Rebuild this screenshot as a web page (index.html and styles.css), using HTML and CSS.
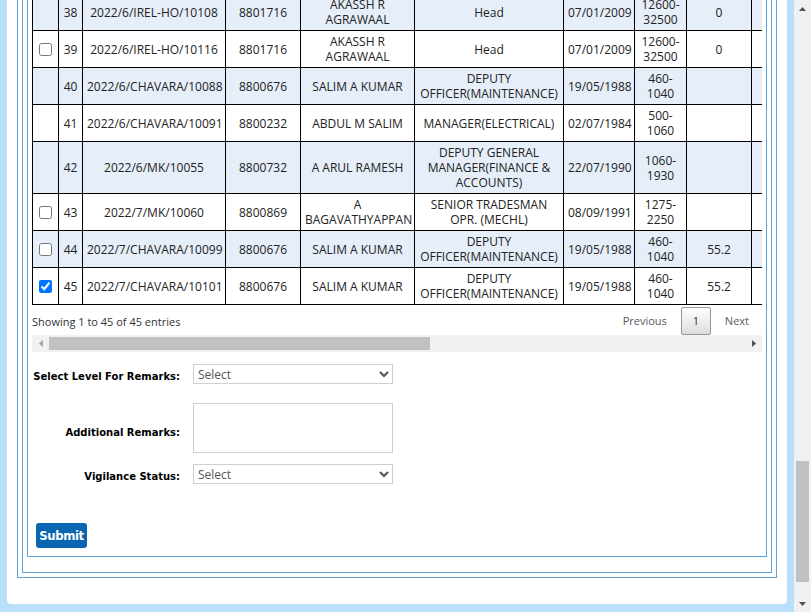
FILE: index.html
```html
<!DOCTYPE html>
<html lang="en">
<head>
<meta charset="utf-8">
<title>Remarks</title>
<link rel="stylesheet" href="styles.css">
</head>
<body>
<div class="page">
  <div class="viewport">
    <div class="panel">
      <div class="box box-outer">
        <div class="box box-mid">
          <div class="box box-inner">
            <div class="dt-scroll">
              <table class="grid">
                <colgroup>
                  <col class="w1"><col class="w2"><col class="w3"><col class="w4"><col class="w5">
                  <col class="w6"><col class="w7"><col class="w8"><col class="w9"><col class="w10">
                </colgroup>
                <tbody>
                  <tr class="shade">
                    <td></td><td>38</td><td class="nw">2022/6/IREL-HO/10108</td><td>8801716</td><td>AKASSH R AGRAWAAL</td><td>Head</td><td class="nw">07/01/2009</td><td>12600-<wbr>32500</td><td>0</td><td></td>
                  </tr>
                  <tr>
                    <td><input type="checkbox" class="chk"></td><td>39</td><td class="nw">2022/6/IREL-HO/10116</td><td>8801716</td><td>AKASSH R AGRAWAAL</td><td>Head</td><td class="nw">07/01/2009</td><td>12600-<wbr>32500</td><td>0</td><td></td>
                  </tr>
                  <tr class="shade">
                    <td></td><td>40</td><td class="nw">2022/6/CHAVARA/10088</td><td>8800676</td><td>SALIM A KUMAR</td><td>DEPUTY OFFICER(MAINTENANCE)</td><td class="nw">19/05/1988</td><td>460-<wbr>1040</td><td></td><td></td>
                  </tr>
                  <tr>
                    <td></td><td>41</td><td class="nw">2022/6/CHAVARA/10091</td><td>8800232</td><td>ABDUL M SALIM</td><td>MANAGER(ELECTRICAL)</td><td class="nw">02/07/1984</td><td>500-<wbr>1060</td><td></td><td></td>
                  </tr>
                  <tr class="shade">
                    <td></td><td>42</td><td class="nw">2022/6/MK/10055</td><td>8800732</td><td>A ARUL RAMESH</td><td>DEPUTY GENERAL MANAGER(FINANCE &amp; ACCOUNTS)</td><td class="nw">22/07/1990</td><td>1060-<wbr>1930</td><td></td><td></td>
                  </tr>
                  <tr>
                    <td><input type="checkbox" class="chk"></td><td>43</td><td class="nw">2022/7/MK/10060</td><td>8800869</td><td>A BAGAVATHYAPPAN</td><td>SENIOR TRADESMAN OPR. (MECHL)</td><td class="nw">08/09/1991</td><td>1275-<wbr>2250</td><td></td><td></td>
                  </tr>
                  <tr class="shade">
                    <td><input type="checkbox" class="chk"></td><td>44</td><td class="nw">2022/7/CHAVARA/10099</td><td>8800676</td><td>SALIM A KUMAR</td><td>DEPUTY OFFICER(MAINTENANCE)</td><td class="nw">19/05/1988</td><td>460-<wbr>1040</td><td>55.2</td><td></td>
                  </tr>
                  <tr>
                    <td><input type="checkbox" class="chk" checked></td><td>45</td><td class="nw">2022/7/CHAVARA/10101</td><td>8800676</td><td>SALIM A KUMAR</td><td>DEPUTY OFFICER(MAINTENANCE)</td><td class="nw">19/05/1988</td><td>460-<wbr>1040</td><td>55.2</td><td>55.2</td>
                  </tr>
                </tbody>
              </table>
              <div class="dt-foot">
                <div class="dt-info">Showing 1 to 45 of 45 entries</div>
                <div class="dt-pager">
                  <span class="pg disabled">Previous</span>
                  <span class="pg current">1</span>
                  <span class="pg disabled">Next</span>
                </div>
              </div>
            </div>
            <div class="hbar">
              <div class="hbtn"><svg width="4" height="7" viewBox="0 0 4 7"><polygon points="4,0 4,7 0,3.5" fill="#a3a3a3"/></svg></div>
              <div class="hthumb"></div>
              <div class="hspace"></div>
              <div class="hbtn"><svg width="4" height="7" viewBox="0 0 4 7"><polygon points="0,0 0,7 4,3.5" fill="#505050"/></svg></div>
            </div>
            <div class="form">
              <div class="frow r1">
                <label class="flabel">Select Level For Remarks:</label>
                <select class="fselect"><option>Select</option></select>
              </div>
              <div class="frow r2">
                <label class="flabel lab-ta">Additional Remarks:</label>
                <textarea class="ftext"></textarea>
              </div>
              <div class="frow r3">
                <label class="flabel lab-vs">Vigilance Status:</label>
                <select class="fselect"><option>Select</option></select>
              </div>
            </div>
            <button class="submit" type="button">Submit</button>
          </div>
        </div>
      </div>
    </div>
  </div>
  <div class="vbar">
    <div class="vbtn"><svg width="7" height="4" viewBox="0 0 7 4"><polygon points="0,4 7,4 3.5,0" fill="#505050"/></svg></div>
    <div class="vtrack"><div class="vthumb"></div></div>
    <div class="vbtn"><svg width="7" height="4" viewBox="0 0 7 4"><polygon points="0,0 7,0 3.5,4" fill="#505050"/></svg></div>
  </div>
</div>
</body>
</html>
```
FILE: styles.css
```css
html, body {
  margin: 0;
  height: 612px;
  overflow: hidden;
}
body {
  background: #b9dffb;
  font-family: "Open Sans", "DejaVu Sans", sans-serif;
}
.page {
  display: flex;
  height: 612px;
}
.viewport {
  width: 794px;
  height: 612px;
  box-sizing: border-box;
  padding: 0 7px 8px 7px;
  display: flex;
  flex-direction: column;
  justify-content: flex-end;
  overflow: hidden;
  flex: none;
}
.panel {
  flex: none;
  background: #fff;
  border-radius: 0 0 4px 4px;
  padding: 0 10px 26px 10px;
}
.box {
  border: 1px solid #5ba3da;
}
.box-outer { padding: 4px; }
.box-mid { padding: 4px 4px 15px 4px; }
.box-inner { padding: 4px 4px 8px 4px; }

/* data table */
.dt-scroll {
  width: 730px;
  overflow: hidden;
}
.grid {
  border-collapse: separate;
  border-spacing: 0;
  table-layout: fixed;
  width: 764px;
  font-size: 12px;
  line-height: 15px;
  color: #222;
}
.w1 { width: 27px; }
.w2 { width: 24px; }
.w3 { width: 143px; }
.w4 { width: 75px; }
.w5 { width: 114px; }
.w6 { width: 149px; }
.w7 { width: 71px; }
.w8 { width: 52px; }
.w9 { width: 65px; }
.w10 { width: 44px; }
.grid td {
  border-right: 1px solid #000;
  border-bottom: 1px solid #000;
  padding: 3px 4px;
  text-align: center;
  vertical-align: middle;
  background: #fff;
}
.grid td:first-child {
  border-left: 1px solid #000;
  padding: 3px 0;
}
.grid tr.shade td { background: #e6eef9; }
.grid td.nw { white-space: nowrap; }
.chk {
  display: block;
  margin: 0 auto;
  width: 13px;
  height: 13px;
}
.dt-foot {
  width: 730px;
  height: 30px;
  box-sizing: border-box;
  padding-top: 2px;
  display: flex;
  align-items: center;
  justify-content: space-between;
}
.dt-info {
  font-size: 11px;
  line-height: 15px;
  color: #333;
}
.dt-pager {
  display: flex;
  align-items: center;
  font-size: 11px;
  margin-right: 1px;
}
.pg {
  padding: 0 12px;
  margin-left: 2px;
  line-height: 26px;
  color: #333;
}
.pg.disabled { color: #595959; }
.pg.current {
  box-sizing: border-box;
  width: 30px;
  height: 28px;
  padding: 0;
  display: flex;
  align-items: center;
  justify-content: center;
  border: 1px solid #979797;
  border-radius: 2px;
  background: linear-gradient(to bottom, #ffffff 0%, #dcdcdc 100%);
}

/* fake horizontal scrollbar */
.hbar {
  width: 730px;
  height: 17px;
  background: #f1f1f1;
  display: flex;
  align-items: center;
}
.hbtn {
  width: 17px;
  height: 17px;
  display: flex;
  align-items: center;
  justify-content: center;
  flex: none;
}
.hthumb {
  width: 381px;
  height: 13px;
  background: #c1c1c1;
  flex: none;
}
.hspace { flex: 1; }

/* form */
.form { margin-top: 12px; }
.frow {
  display: flex;
  align-items: center;
  gap: 13px;
}
.r2 { margin-top: 19px; }
.r3 { margin-top: 11px; }
.flabel {
  width: 148px;
  flex: none;
  text-align: right;
  font-family: "DejaVu Sans", Verdana, sans-serif;
  font-weight: bold;
  font-size: 10px;
  color: #000;
  padding-top: 5px;
}
.lab-ta { padding-top: 9px; }
.lab-vs { padding-top: 4px; }
.fselect {
  width: 200px;
  height: 20px;
  box-sizing: border-box;
  border: 1px solid #cbd0d6;
  border-radius: 0;
  background: #fff;
  font-family: "Open Sans", sans-serif;
  font-size: 12px;
  color: #555;
  padding: 0;
  margin: 0;
}
.ftext {
  width: 200px;
  height: 50px;
  box-sizing: border-box;
  border: 1px solid #cbd0d6;
  border-radius: 0;
  resize: none;
  margin: 0;
  padding: 2px;
  font-family: "Open Sans", sans-serif;
  font-size: 12px;
}
.submit {
  display: block;
  margin: 39px 0 0 4px;
  width: 51px;
  height: 25px;
  padding: 0;
  border: none;
  border-radius: 3px;
  background: #0a66b2;
  color: #fff;
  font-family: "DejaVu Sans Condensed", "DejaVu Sans", sans-serif;
  font-weight: bold;
  font-size: 13px;
  letter-spacing: -0.4px;
}

/* fake page scrollbar */
.vbar {
  width: 17px;
  height: 612px;
  flex: none;
  background: #f1f1f1;
  display: flex;
  flex-direction: column;
}
.vbtn {
  height: 17px;
  display: flex;
  align-items: center;
  justify-content: center;
  flex: none;
}
.vtrack { flex: 1; }
.vthumb {
  margin: 444px 2px 0 2px;
  height: 121px;
  background: #c1c1c1;
}
```
